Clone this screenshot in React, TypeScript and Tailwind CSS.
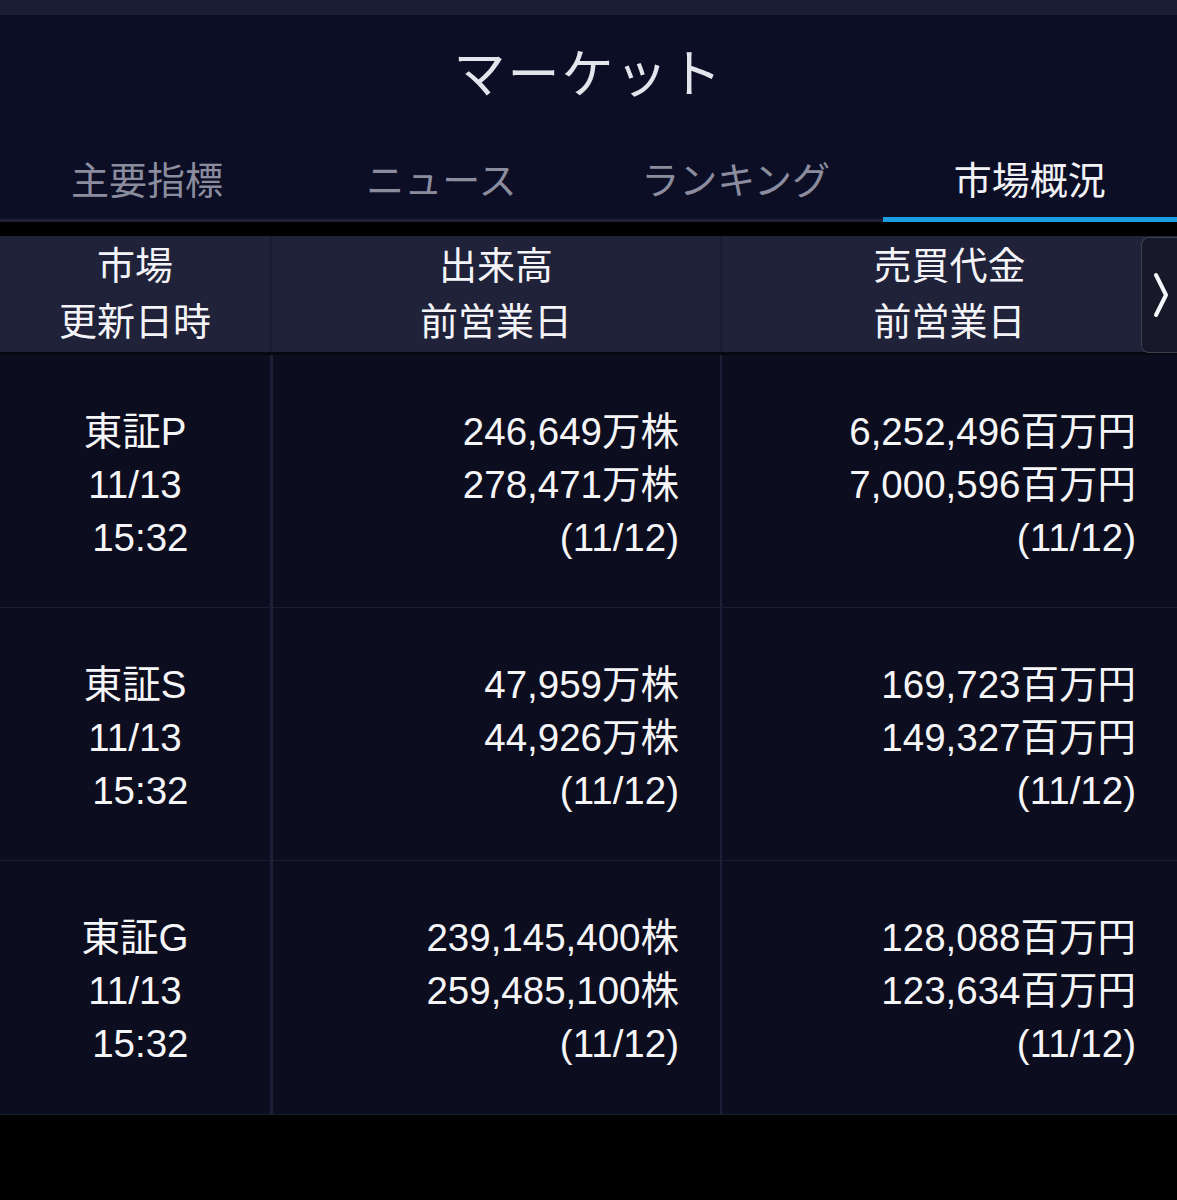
import React from "react";

const font = { fontFamily: '"Liberation Sans", "Noto Sans CJK JP", sans-serif' };

type Row = { market: string; vol: string[]; val: string[] };

const rows: Row[] = [
  { market: "東証P", vol: ["246,649万株", "278,471万株", "(11/12)"], val: ["6,252,496百万円", "7,000,596百万円", "(11/12)"] },
  { market: "東証S", vol: ["47,959万株", "44,926万株", "(11/12)"], val: ["169,723百万円", "149,327百万円", "(11/12)"] },
  { market: "東証G", vol: ["239,145,400株", "259,485,100株", "(11/12)"], val: ["128,088百万円", "123,634百万円", "(11/12)"] },
];

const tabs = ["主要指標", "ニュース", "ランキング", "市場概況"];

export default function App() {
  return (
    <div className="w-[1177px] h-[1200px] bg-black text-white overflow-hidden" style={font}>
      <div className="h-[15px] bg-[#1a1d34]" />
      <div className="bg-[#0c0e26]">
        <div className="h-[115px] pt-[4px] flex items-center justify-center text-[52px] text-[#e4e4ec] tracking-[2px]">
          マーケット
        </div>
        <div className="grid grid-cols-4 h-[92px] border-b-[3px] border-[#1c1f36]">
          {tabs.map((t, i) => (
            <div key={t} className="relative flex items-end justify-center pb-[14px]">
              <span className={`text-[38px] leading-[48px] ${i === 3 ? "text-[#f2f2f6]" : "text-[#8b8d9e]"}`}>{t}</span>
              {i === 3 && <div className="absolute left-0 right-0 bottom-[-3px] h-[5px] bg-[#1c9fe2]" />}
            </div>
          ))}
        </div>
      </div>
      <div className="h-[14px] bg-black" />
      {/* header row */}
      <div className="relative flex h-[116px] bg-[#1f2239] text-[38px] leading-[56px] text-[#f4f4f8]">
        <div className="w-[270px] flex flex-col items-center justify-center">
          <div>市場</div>
          <div>更新日時</div>
        </div>
        <div className="w-[2px] bg-[#1a1c31]" />
        <div className="w-[448px] flex flex-col items-center justify-center">
          <div>出来高</div>
          <div>前営業日</div>
        </div>
        <div className="w-[2px] bg-[#1a1c31]" />
        <div className="flex-1 flex flex-col items-center justify-center">
          <div>売買代金</div>
          <div>前営業日</div>
        </div>
        <div className="absolute right-0 top-[1px] bottom-[-1px] w-[36px] bg-[#171928] border border-r-0 border-[#3d4053] rounded-l-[8px] flex items-center justify-center pl-[2px]">
          <svg width="18" height="46" viewBox="0 0 18 46" fill="none">
            <polyline points="4,3 14,23 4,43" stroke="#f6f6fa" strokeWidth="4" strokeLinecap="round" strokeLinejoin="round" />
          </svg>
        </div>
      </div>
      <div className="h-[3px] bg-[#07080f]" />
      {/* data rows */}
      <div className="bg-[#0c0d1f]">
        {rows.map((r, idx) => (
          <div key={r.market} className={`flex h-[253px] text-[38.5px] leading-[53px] text-[#f6f6f8] ${idx < rows.length - 1 ? "border-b border-[#1b1d33]" : ""}`}>
            <div className="w-[270px] flex flex-col items-center justify-center pt-[6px]">
              <div>{r.market}</div>
              <div>11/13</div>
              <div className="whitespace-pre"> 15:32</div>
            </div>
            <div className="w-[3px] bg-[#1e2038]" />
            <div className="w-[447px] flex flex-col items-end justify-center pr-[41px] pt-[6px]">
              {r.vol.map((v, i) => (
                <div key={i}>{v}</div>
              ))}
            </div>
            <div className="w-[2px] bg-[#1e2038]" />
            <div className="flex-1 flex flex-col items-end justify-center pr-[41px] pt-[6px]">
              {r.val.map((v, i) => (
                <div key={i}>{v}</div>
              ))}
            </div>
          </div>
        ))}
      </div>
      <div className="h-[1px] bg-[#1b1d33]" />
    </div>
  );
}
